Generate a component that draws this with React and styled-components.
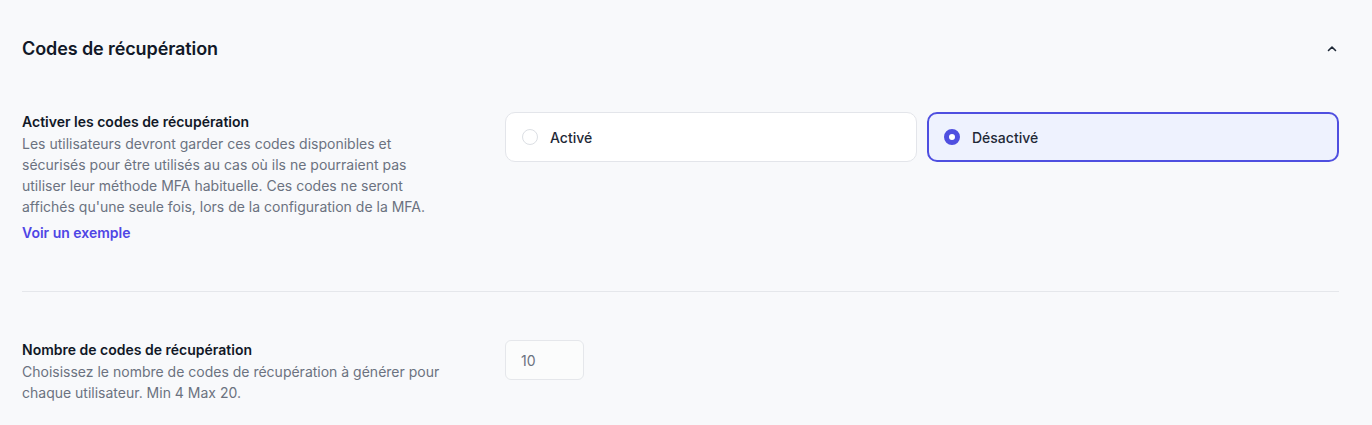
import React, { useState } from "react";
import styled, { createGlobalStyle } from "styled-components";

const GlobalStyle = createGlobalStyle`
    html, body {
        margin: 0;
        padding: 0;
        background: #f8f9fb;
        font-family: Inter, "Noto Sans", sans-serif;
        -webkit-font-smoothing: antialiased;
    }
`;

const Page = styled.div`
    padding: 0 33px 0 22px;
    color: #111827;
`;

const Header = styled.div`
    display: flex;
    align-items: center;
    justify-content: space-between;
    height: 97px;
`;

const Title = styled.h2`
    margin: 0;
    font-size: 18px;
    font-weight: 600;
    letter-spacing: -0.1px;
    color: #111827;
`;

const Toggle = styled.button`
    border: none;
    background: none;
    padding: 0;
    width: 18px;
    height: 18px;
    display: flex;
    align-items: center;
    justify-content: center;
    color: #1f2937;
    margin-right: -2px;
`;

const Row = styled.div`
    display: grid;
    grid-template-columns: 440px 1fr;
    column-gap: 43px;
    padding: ${p => p.$pad};
    border-bottom: ${p => (p.$divider ? "1px solid #e5e7eb" : "none")};
`;

const Info = styled.div`
    display: flex;
    flex-direction: column;
    max-width: 420px;
`;

const Label = styled.div`
    font-size: 14px;
    font-weight: 600;
    line-height: 20px;
    color: #111827;
`;

const Description = styled.p`
    margin: 1px 0 0;
    font-size: 14px;
    line-height: 21px;
    color: #6b7280;
`;

const Link = styled.a`
    margin-top: 6px;
    font-size: 14px;
    font-weight: 600;
    line-height: 20px;
    color: #4f46e5;
    text-decoration: none;
    cursor: pointer;
`;

const Options = styled.div`
    display: grid;
    grid-template-columns: 1fr 1fr;
    gap: 10px;
    align-self: start;
`;

const Option = styled.label`
    display: flex;
    align-items: center;
    gap: 12px;
    height: 50px;
    box-sizing: border-box;
    border-radius: 10px;
    border: ${p => (p.$checked ? "2px solid #4f4fe0" : "1px solid #e3e5ea")};
    padding: 0 ${p => (p.$checked ? "15px" : "16px")};
    background: ${p => (p.$checked ? "#eef2fe" : "#ffffff")};
    font-size: 14px;
    font-weight: 500;
    color: #1f2937;
    cursor: pointer;
`;

const Radio = styled.span`
    width: 16px;
    height: 16px;
    box-sizing: border-box;
    border-radius: 50%;
    flex-shrink: 0;
    border: ${p => (p.$checked ? "5px solid #4f4fe0" : "1px solid #dcdfe4")};
    background: #ffffff;
`;

const NumberInput = styled.input`
    width: 79px;
    height: 40px;
    box-sizing: border-box;
    border: 1px solid #e5e7eb;
    border-radius: 6px;
    background: #fbfcfc;
    padding: 0 15px;
    font-family: inherit;
    font-size: 14px;
    color: #6b7280;
    outline: none;
`;

const App = () => {
    const [enabled, setEnabled] = useState(false);

    return (
        <Page>
            <GlobalStyle />
            <Header>
                <Title>Codes de récupération</Title>
                <Toggle aria-label="Réduire">
                    <svg width="12" height="12" viewBox="0 0 12 12" fill="none">
                        <path d="M2.5 7.5L6 4L9.5 7.5" stroke="currentColor" strokeWidth="1.6" strokeLinecap="round" strokeLinejoin="round" />
                    </svg>
                </Toggle>
            </Header>
            <Row $divider $pad="15px 0 48px">
                <Info>
                    <Label>Activer les codes de récupération</Label>
                    <Description>
                        Les utilisateurs devront garder ces codes disponibles et sécurisés pour être utilisés au cas où ils ne pourraient pas utiliser leur méthode MFA habituelle. Ces codes ne seront affichés qu'une seule fois, lors de la configuration de la MFA.
                    </Description>
                    <Link>Voir un exemple</Link>
                </Info>
                <Options>
                    <Option $checked={enabled} onClick={() => setEnabled(true)}>
                        <Radio $checked={enabled} />
                        Activé
                    </Option>
                    <Option $checked={!enabled} onClick={() => setEnabled(false)}>
                        <Radio $checked={!enabled} />
                        Désactivé
                    </Option>
                </Options>
            </Row>
            <Row $pad="48px 0 20px">
                <Info>
                    <Label>Nombre de codes de récupération</Label>
                    <Description>
                        Choisissez le nombre de codes de récupération à générer pour chaque utilisateur. Min 4 Max 20.
                    </Description>
                </Info>
                <div>
                    <NumberInput type="text" defaultValue="10" />
                </div>
            </Row>
        </Page>
    );
};

export default App;
